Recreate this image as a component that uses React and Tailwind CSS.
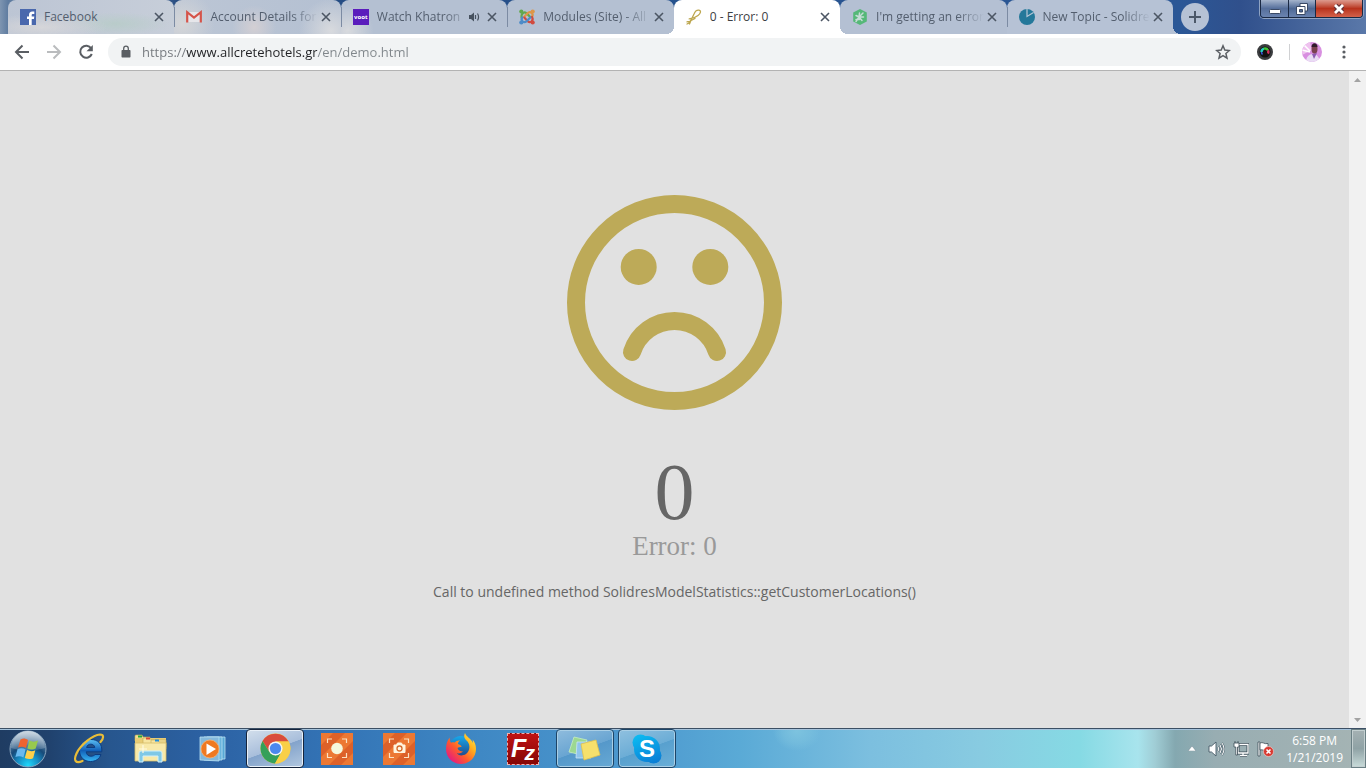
import React from "react";

const ui = "font-['Open_Sans','Noto_Sans',sans-serif]";

/* ---------- favicons ---------- */

function FacebookIcon() {
  return (
    <svg viewBox="0 0 16 16" className="size-4 shrink-0" aria-hidden="true">
      <rect width="16" height="16" fill="#4a68ad" />
      <path d="M9 16V10H7V7.500h2V6c0-2.300 1.200-3.500 3.300-3.500h2V5h-1.300C12 5 11.700 5.400 11.700 6.200v1.300h2.600L13.900 10h-2.200v6z" fill="#fff" />
    </svg>
  );
}

function GmailIcon() {
  return (
    <svg viewBox="0 0 16 16" className="size-4 shrink-0" aria-hidden="true">
      <path d="M2 3h12v10H2z" fill="#e6e6ea" />
      <path d="M1.200 13.500V3.200L8 8.600l6.800-5.400v10.300" fill="none" stroke="#d5544a" strokeWidth="2.200" />
    </svg>
  );
}

function VootIcon() {
  return (
    <span className="flex size-4 shrink-0 items-center justify-center bg-[#5a1cbc] text-[6px] leading-none font-bold text-white">
      voot
    </span>
  );
}

function JoomlaIcon() {
  return (
    <svg viewBox="0 0 16 16" className="size-4 shrink-0" fill="none" strokeWidth="2.200" strokeLinecap="round" aria-hidden="true">
      <path d="M2.500 8.500V7c0-1.200.3-1.700 1-2.400M3.500 4.500c1.700-1.800 3-1.300 4.200-.1l3.300 3.300" stroke="#62a84e" />
      <path d="M8.500 4.200c1.500-1.500 3-1.500 4.200-.2 1.300 1.300 1.300 2.700.1 4M8.400 4.500 5 8" stroke="#dd9648" />
      <path d="M13 8c1 1.500.8 3-.3 4.200-1.500 1.400-3 1-4.200-.3L5.300 8.600" stroke="#d14b3f" />
      <path d="M7.600 12.200c-1.300 1.200-2.800 1.200-4.100 0C2.300 11 2.300 9.600 3.300 8.300M7.700 12l3.600-3.500" stroke="#4e8cc8" />
      <circle cx="2.300" cy="2.600" r="2.100" fill="#62a84e" stroke="none" />
      <circle cx="13.700" cy="2.600" r="2.100" fill="#dd9648" stroke="none" />
      <circle cx="13.700" cy="13.500" r="2.100" fill="#d14b3f" stroke="none" />
      <circle cx="2.300" cy="13.500" r="2.100" fill="#4e8cc8" stroke="none" />
    </svg>
  );
}

function RibbonIcon() {
  return (
    <svg viewBox="0 0 16 16" className="size-4 shrink-0" fill="none" stroke="#bda74f" strokeWidth="1.300" strokeLinecap="round" aria-hidden="true">
      <path d="M1 15c3-1 5.500-6.500 7-10C9 2.500 11 .900 13 1.200c2.500.500 1.500 3.300-1 5.300C9.500 8.500 6 9.700 3.200 9.900M1 12.800c2.500-.400 5-1.500 8-3.300M5.500 10l-2 5" />
    </svg>
  );
}

function LeafIcon() {
  return (
    <svg viewBox="0 0 16 16" className="size-4 shrink-0" aria-hidden="true">
      <path d="M8 0l6.800 3.500v9L8 16l-6.800-3.500v-9z" fill="#55b878" />
      <path d="M4 12.500 7 8M7 8 4 6.500M7 8l.5-4M7 8l4-4M7 8h4.500M7 8l3 3.500M4 10.500h3.500" stroke="#c5dcd6" strokeWidth="1.500" strokeLinecap="round" fill="none" />
    </svg>
  );
}

function PieIcon() {
  return (
    <svg viewBox="0 0 16 16" className="size-4 shrink-0" aria-hidden="true">
      <circle cx="8" cy="8" r="8" fill="#24789a" />
      <path d="M8 0v7.500L14.500 3.500" fill="none" stroke="#b5c6d6" strokeWidth="1.200" />
    </svg>
  );
}

function CloseIcon() {
  return (
    <svg viewBox="0 0 16 16" className="size-4" fill="none" stroke="#4c5664" strokeWidth="1.600" aria-hidden="true">
      <path d="m4 4 8 8M12 4l-8 8" />
    </svg>
  );
}

function AudioIcon() {
  return (
    <svg viewBox="0 0 12 12" className="mr-1 size-3 shrink-0" fill="none" stroke="#46515f" aria-hidden="true">
      <path d="M1 4h2l3-2.500v9L3 8H1z" fill="#46515f" stroke="none" />
      <path d="M7.500 4v4M9.500 2.500c1.200 2 1.200 5 0 7" strokeWidth="1.200" />
    </svg>
  );
}

const tabs = [
  { title: "Facebook", icon: FacebookIcon, bg: "bg-[radial-gradient(ellipse_at_20%_80%,#d6d6d9_0%,transparent_35%),radial-gradient(ellipse_at_65%_70%,#b9ccca_0%,transparent_35%),linear-gradient(90deg,#bcc5d4,#c7ced9)]" },
  { title: "Account Details for", icon: GmailIcon, line: true, fade: true, bg: "bg-[radial-gradient(circle_at_5%_70%,#d5d6d8_0%,transparent_20%),radial-gradient(circle_at_48%_80%,#d3cfd3_0%,transparent_24%),radial-gradient(circle_at_94%_90%,#d8dade_0%,transparent_20%),linear-gradient(90deg,#bcc6d5,#b4c0d2)]" },
  { title: "Watch Khatron", icon: VootIcon, line: true, fade: true, audio: true, bg: "bg-[radial-gradient(circle_at_4%_90%,#d8dade_0%,transparent_16%),linear-gradient(90deg,#b4c0d2,#b4c0d2)]" },
  { title: "Modules (Site) - All", icon: JoomlaIcon, line: true, fade: true, bg: "bg-[#b4c0d2]" },
  { title: "0 - Error: 0", icon: RibbonIcon, active: true, bg: "bg-white" },
  { title: "I'm getting an error", icon: LeafIcon, fade: true, bg: "bg-[#b4c0d3]" },
  { title: "New Topic - Solidre", icon: PieIcon, line: true, fade: true, last: true, bg: "bg-[#b6c2d5]" },
];

function Tab({ tab }) {
  const Icon = tab.icon;
  return (
    <li className={`relative flex h-[34px] min-w-0 flex-1 items-center rounded-t-lg pr-[7px] pl-3 ${tab.bg}`}>
      {tab.line && <span className="absolute top-[7px] left-0 h-5 w-px bg-[#7c8ba3]" />}
      {tab.active && (
        <>
          <span className="absolute bottom-0 -left-2 z-10 size-2 bg-[radial-gradient(circle_at_0_0,transparent_8px,#fff_8px)]" />
          <span className="absolute -right-2 bottom-0 z-10 size-2 bg-[radial-gradient(circle_at_100%_0,transparent_8px,#fff_8px)]" />
        </>
      )}
      {tab.last && <span className="absolute -right-2 bottom-0 size-2 bg-[radial-gradient(circle_at_100%_0,transparent_8px,#b6c2d5_8px)]" />}
      <a href="#page" className="flex min-w-0 flex-1 items-center gap-2">
        <Icon />
        <span className={`min-w-0 flex-1 overflow-hidden text-xs whitespace-nowrap ${tab.active ? "text-[#3c4043]" : "text-[#535e6e]"} ${tab.fade ? "mask-r-from-75% mask-r-to-100%" : ""}`}>
          {tab.title}
        </span>
      </a>
      {tab.audio && <AudioIcon />}
      <button type="button" aria-label={`Close ${tab.title}`} className="shrink-0">
        <CloseIcon />
      </button>
    </li>
  );
}

function WindowControls() {
  return (
    <div className="mr-[3px] ml-auto flex h-[18px] shrink-0 self-start overflow-hidden rounded-b border border-t-0 border-[#1a2944] shadow-[0_0_0_1px_#8fa3c3]">
      <button type="button" aria-label="Minimize" className="flex w-7 items-center justify-center border-r border-[#1a2944] bg-linear-to-b from-[#a5b4cc] via-[#566f9b] to-[#6a83b0]">
        <svg viewBox="0 0 12 12" className="size-3" aria-hidden="true"><rect x=".5" y="6.500" width="11" height="4" rx="1" fill="#fff" stroke="#3b4a66" /></svg>
      </button>
      <button type="button" aria-label="Restore" className="flex w-[27px] items-center justify-center border-r border-[#1a2944] bg-linear-to-b from-[#a5b4cc] via-[#4e6894] to-[#6a83b0]">
        <svg viewBox="0 0 12 12" className="size-3" fill="#fff" stroke="#3b4a66" aria-hidden="true">
          <path d="M4 .500h7.500V8H9V11.500H.500V3.500H4z" />
          <path d="M3.500 6.500h3v2.500h-3z" fill="#4e6894" />
          <path d="M4 3.500h5V8" fill="none" />
        </svg>
      </button>
      <button type="button" aria-label="Close window" className="flex w-[46px] items-center justify-center bg-linear-to-b from-[#dc9a8e] via-[#b8321c] to-[#d4614a]">
        <svg viewBox="0 0 12 12" className="size-3" fill="none" aria-hidden="true">
          <path d="m2.500 2.500 7 7M9.500 2.500l-7 7" stroke="#5c3038" strokeWidth="5" />
          <path d="m2 2 8 8M10 2l-8 8" stroke="#fff" strokeWidth="2.800" />
        </svg>
      </button>
    </div>
  );
}

function TabStrip() {
  return (
    <header className="flex h-[34px] items-center bg-[linear-gradient(90deg,#7e95b1_0,#5f7ca0_8px,#54739c_150px,#24497f_180px,#26528d_640px,#2b5796_1180px,#30508c_1240px,#5a78a9_1366px)] pl-2">
      <ul className="flex max-w-[1165px] min-w-0 flex-1">
        {tabs.map((tab) => <Tab key={tab.title} tab={tab} />)}
      </ul>
      <button type="button" aria-label="New tab" className="ml-2 flex size-7 shrink-0 items-center justify-center rounded-full bg-[#b6c2d5]">
        <svg viewBox="0 0 14 14" className="size-[14px]" stroke="#4c5869" strokeWidth="2" aria-hidden="true"><path d="M7 1v12M1 7h12" /></svg>
      </button>
      <WindowControls />
    </header>
  );
}

/* ---------- toolbar ---------- */

function Toolbar() {
  return (
    <div className="flex h-[37px] items-center border-b border-[#b3b3b3] bg-white">
      <div className="flex items-center gap-4 pr-[14px] pl-[14px]">
        <button type="button" aria-label="Back">
          <svg viewBox="0 0 16 16" className="size-4" fill="none" stroke="#5a5e63" strokeWidth="2" aria-hidden="true"><path d="M15 8H2M8.500 1.500 2 8l6.500 6.500" /></svg>
        </button>
        <button type="button" aria-label="Forward">
          <svg viewBox="0 0 16 16" className="size-4" fill="none" stroke="#babcbe" strokeWidth="2" aria-hidden="true"><path d="M1 8h13M7.500 1.500 14 8l-6.500 6.500" /></svg>
        </button>
        <button type="button" aria-label="Reload">
          <svg viewBox="0 0 16 16" className="size-4" fill="none" stroke="#5a5e63" strokeWidth="2" aria-hidden="true">
            <path d="M13.200 4.300A6 6 0 1 0 13.800 10" />
            <path d="M14.800 1v6.300H8.500z" fill="#5a5e63" stroke="none" />
          </svg>
        </button>
      </div>
      <div className="flex h-7 min-w-0 flex-1 items-center rounded-full bg-[#f1f3f4] pr-[10px] pl-3">
        <svg viewBox="0 0 12 14" className="h-[14px] w-3 shrink-0" aria-hidden="true">
          <path d="M2.500 5h7c.600 0 1 .400 1 1v5.500c0 .600-.400 1-1 1h-7c-.600 0-1-.400-1-1V6c0-.600.400-1 1-1z" fill="#5a5e63" />
          <path d="M3.700 6V3.500a2.300 2.300 0 0 1 4.600 0V6" fill="none" stroke="#5a5e63" strokeWidth="1.300" />
        </svg>
        <input
          type="text"
          aria-label="Address"
          defaultValue="https://www.allcretehotels.gr/en/demo.html"
          className="ml-[10px] h-6 min-w-0 flex-1 bg-[linear-gradient(90deg,#73777c_44px,#202124_44px,#202124_175px,#80868b_175px)] bg-clip-text text-[13px] text-transparent outline-none"
        />
        <button type="button" aria-label="Bookmark this page" className="shrink-0">
          <svg viewBox="0 0 16 16" className="size-4" fill="none" stroke="#5a5e63" strokeWidth="1.500" aria-hidden="true">
            <path d="m8 1.800 1.800 4.300 4.600.4-3.500 3 1.100 4.600L8 11.700l-4 2.400 1.100-4.600-3.500-3 4.600-.4z" />
          </svg>
        </button>
      </div>
      <div className="flex items-center pr-[14px] pl-4">
        <button type="button" aria-label="Screen recorder">
          <svg viewBox="0 0 16 16" className="size-4" fill="none" aria-hidden="true">
            <circle cx="8" cy="8" r="8" fill="#3b3d3f" />
            <circle cx="8" cy="8" r="5.500" fill="#111" />
            <path d="M4.500 8A3.500 3.500 0 0 1 7 4.700" stroke="#25cfc0" strokeWidth="2.400" />
            <path d="M7 4.700a3.500 3.500 0 0 1 4 1.600" stroke="#45c735" strokeWidth="2.400" />
            <path d="M11 6.300a3.500 3.500 0 0 1 0 3.400" stroke="#d32f5d" strokeWidth="2.400" />
            <path d="M4.500 8a3.500 3.500 0 0 0 1 2.400" stroke="#3b59df" strokeWidth="1.500" />
          </svg>
        </button>
        <span className="mr-3 ml-4 h-4 w-px bg-[#d0d1d3]" />
        <button type="button" aria-label="Profile">
          <svg viewBox="0 0 20 20" className="size-5 rounded-full" aria-hidden="true">
            <rect width="20" height="20" fill="#d88fe0" />
            <path d="M0 0h8l2 8-10 5z" fill="#efc2ef" />
            <path d="M2 3l6 6M0 8l8 2" stroke="#fff" strokeWidth="1.500" />
            <path d="M4 20c0-5 3-8 7-8s6 3 7 8z" fill="#e9dcf4" />
            <path d="m10 12 2 5 3-6" fill="#8b5bb0" />
            <ellipse cx="12.500" cy="7" rx="3" ry="4.500" fill="#7a4150" />
            <path d="M9.500 5c0-5 6-5 6 0z" fill="#321b2c" />
          </svg>
        </button>
        <button type="button" aria-label="Menu" className="ml-[14px]">
          <svg viewBox="0 0 16 16" className="size-4" fill="#5a5e63" aria-hidden="true">
            <circle cx="8" cy="3" r="1.600" /><circle cx="8" cy="8" r="1.600" /><circle cx="8" cy="13" r="1.600" />
          </svg>
        </button>
      </div>
    </div>
  );
}

/* ---------- page ---------- */

function ErrorPage() {
  return (
    <div className="flex flex-1 bg-[#e1e1e1]">
      <main id="page" className="flex min-w-0 flex-1 flex-col items-center px-4 pt-[124px] pb-12 text-center">
        <svg viewBox="0 0 215 215" className="w-[215px]" fill="none" stroke="#bdaa58" strokeWidth="18" role="img" aria-label="Sad face">
          <circle cx="107.500" cy="107.500" r="98.500" />
          <path d="M65 157a44.600 44.600 0 0 1 85 0" strokeLinecap="round" />
          <circle cx="71.700" cy="71.900" r="18" fill="#bdaa58" stroke="none" />
          <circle cx="143.300" cy="71.900" r="18" fill="#bdaa58" stroke="none" />
        </svg>
        <h1 className="mt-11 font-['Liberation_Serif',serif] text-[80px] leading-[76px] text-[#666]">0</h1>
        <h2 className="font-['Liberation_Serif',serif] text-[27px] leading-8 text-[#999]">Error: 0</h2>
        <p className="mt-5 text-sm leading-5 text-[#666]">Call to undefined method SolidresModelStatistics::getCustomerLocations()</p>
      </main>
      <div className="flex w-[17px] shrink-0 flex-col justify-between bg-[#f1f1f1]">
        <button type="button" aria-label="Scroll up" className="flex h-[17px] items-center justify-center">
          <svg viewBox="0 0 7 4" className="h-1 w-[7px]" aria-hidden="true"><path d="M3.500 0 7 4H0z" fill="#a3a3a3" /></svg>
        </button>
        <button type="button" aria-label="Scroll down" className="flex h-[17px] items-center justify-center">
          <svg viewBox="0 0 7 4" className="h-1 w-[7px]" aria-hidden="true"><path d="M3.500 4 7 0H0z" fill="#a3a3a3" /></svg>
        </button>
      </div>
    </div>
  );
}

/* ---------- taskbar ---------- */

function StartOrb() {
  return (
    <svg viewBox="0 0 38 38" className="size-[38px]" aria-hidden="true">
      <defs>
        <radialGradient id="orb" cx=".5" cy=".95" r=".9">
          <stop offset="0" stopColor="#1fd8fb" /><stop offset=".35" stopColor="#1689c0" /><stop offset=".6" stopColor="#174a79" /><stop offset="1" stopColor="#7d9ab5" />
        </radialGradient>
        <linearGradient id="orbShine" x2="0" y2="1"><stop offset="0" stopColor="#fff" stopOpacity=".6" /><stop offset="1" stopColor="#fff" stopOpacity=".15" /></linearGradient>
      </defs>
      <circle cx="19" cy="19" r="18" fill="url(#orb)" stroke="#8aa6bf" />
      <path d="M2 18a17 17 0 0 1 34 0c-9 3-25 3-34 0z" fill="url(#orbShine)" />
      <path d="M11.500 9.500c3-1.500 5-1 7.500.500L17 18c-2.500-1.500-5-1.800-8-.5z" fill="#ee6330" />
      <path d="M20.300 10.600c3 1.300 5.500 1.500 8.700 0l-2.300 8c-3 1.400-5.500 1-8.300-.2z" fill="#97c94e" />
      <path d="M8.600 19c3-1.300 5.500-1 8 .500l-2.200 8c-2.500-1.500-5-1.700-8-.5z" fill="#69b9ef" />
      <path d="M18 20c2.700 1.300 5.300 1.600 8.300.3l-2.200 7.900c-3 1.400-5.600 1-8.300-.3z" fill="#fdd04b" />
    </svg>
  );
}

function ExplorerIcon() {
  return (
    <svg viewBox="0 0 34 34" className="size-[34px]" fill="none" aria-hidden="true">
      <defs><linearGradient id="ie" x2="0" y2="1"><stop offset="0" stopColor="#5cc0f4" /><stop offset=".5" stopColor="#1260b8" /><stop offset="1" stopColor="#38b7f4" /></linearGradient></defs>
      <path d="M29 22.500C27.500 27 23.500 29.500 18.500 29.500 12 29.500 7.500 25 7.500 18.500S12.500 7.500 19 7.500c7 0 11.500 4.500 10.800 12.300H14.200c.3 3 2.200 4.400 4.800 4.400 2 0 3-.6 4-1.700zM14.600 15.500h8.200c-.5-2.300-1.900-3.300-4-3.300s-3.600 1-4.200 3.300z" fill="url(#ie)" stroke="#0d3c80" strokeWidth="1" />
      <path d="M28.500 10c3.500-4 3.500-7.500-.5-7.500C21 3 9 12 4.500 21.500c-3.200 7-1 10.500 6 7.500" stroke="#e9bd38" strokeWidth="2.200" strokeLinecap="round" />
    </svg>
  );
}

function FolderIcon() {
  return (
    <svg viewBox="0 0 34 32" className="h-8 w-[34px]" aria-hidden="true">
      <path d="M1 3q0-1 1-1h6l1 2h7v4H1z" fill="#f3dd91" stroke="#c4a854" strokeWidth=".6" />
      <path d="M1 5h31v23H1z" fill="#e9cc74" />
      <path d="M9 5h7l1 2h15v7H9z" fill="#f7e5a0" stroke="#c4a854" strokeWidth=".6" />
      <path d="M17 7h7l1 2h7v7H17z" fill="#f7e5a0" stroke="#c4a854" strokeWidth=".6" />
      <rect x="4" y="2.500" width="4" height="2" fill="#25a83d" /><rect x="12" y="4.500" width="4" height="2" fill="#db4838" /><rect x="21" y="6.500" width="4" height="2" fill="#238edb" />
      <path d="M1 10h31v18H1z" fill="#f8e9a9" stroke="#d6bd6a" strokeWidth=".8" />
      <path d="M5 29V20q0-2 2-2h19q2 0 2 2v9h-4v-6H9v6z" fill="#7fc8e6" stroke="#d1f0fb" />
      <path d="M9 12v8M5 16h8" stroke="#fffbe0" strokeWidth="1.200" />
    </svg>
  );
}

function MediaIcon() {
  return (
    <svg viewBox="0 0 30 28" className="h-7 w-[30px]" aria-hidden="true">
      <path d="M9 2h18v22H9z" fill="#58a8d5" stroke="#b9e1f2" strokeWidth=".8" /><path d="M6 2h18v23H6z" fill="#69b4dd" stroke="#b9e1f2" strokeWidth=".8" />
      <path d="M2 2h19v24l-19-1z" fill="#84b9dc" stroke="#b9e1f2" strokeWidth=".8" />
      <circle cx="12" cy="14" r="9" fill="#ef7921" stroke="#fbb06c" strokeWidth=".8" /><path d="M8.500 8.500 18 14l-9.500 6z" fill="#fff" />
    </svg>
  );
}

function ChromeIcon() {
  return (
    <svg viewBox="0 0 32 32" className="size-[31px]" aria-hidden="true">
      <circle cx="16" cy="16" r="15.500" fill="#f8cd45" />
      <path d="M2.600 8.200A15.500 15.500 0 0 1 29.500 8.800H16L9.800 19.600z" fill="#d94c3d" />
      <path d="M2.600 8.200 9.800 19.600 16 23.200l6.200-3.600L15.500 31.500A15.500 15.500 0 0 1 2.600 8.200z" fill="#35a05a" />
      <path d="M29.500 8.800A15.500 15.500 0 0 1 15.500 31.500L22.200 19.600 23 12 16 8.800z" fill="#f9cf47" />
      <circle cx="16" cy="16" r="7.300" fill="#f5f5f5" /><circle cx="16" cy="16" r="5.800" fill="#4b88ee" />
    </svg>
  );
}

function CaptureIcon({ camera = false }) {
  return (
    <svg viewBox="0 0 32 32" className="size-8" fill="none" aria-hidden="true">
      <rect width="32" height="32" fill="#ec7833" />
      <path d="M0 24 24 0H12L0 12zM8 32 32 8v12L20 32z" fill="#dd6129" />
      <path d="M6.500 10V6H11M21 6h4.500v4M6.500 20v4.500H11M21 24.500h4.500V20" stroke="#fbe1c1" strokeWidth="1.200" />
      {camera ? (
        <>
          <path d="M11 12h2.500l1-2h4l1 2H22v7.500H11z" fill="#fff5df" stroke="#fff5df" strokeLinejoin="round" />
          <circle cx="16.500" cy="15.500" r="2.500" stroke="#d66a2c" strokeWidth="1.300" />
        </>
      ) : (
        <circle cx="16" cy="15.500" r="5.800" fill="#f5f7dc" />
      )}
    </svg>
  );
}

function FirefoxIcon() {
  return (
    <svg viewBox="0 0 32 32" className="size-8" aria-hidden="true">
      <defs>
        <linearGradient id="fox" x1="1" y1="0" x2=".1" y2=".9"><stop offset="0" stopColor="#fff44f" /><stop offset=".35" stopColor="#ffb01e" /><stop offset=".65" stopColor="#ff5a2d" /><stop offset="1" stopColor="#e31587" /></linearGradient>
        <linearGradient id="globe" x2="0" y2="1"><stop offset="0" stopColor="#16a9ec" /><stop offset="1" stopColor="#213779" /></linearGradient>
      </defs>
      <circle cx="16" cy="15" r="12" fill="url(#globe)" />
      <path d="M20 0c-2 4 0 6 2.500 8.500C25.500 12 25 18 21 21c-4 2.500-8 1.500-9-1 2 1 4.500 0 6-1.500-3 0-5-1.200-5.500-3.500 1-.8 2.500-1 4-1 .3-1.500-2-2.500-3.500-3 0-1.500.500-2.500 2-3.500-2.500-.200-4 .500-5.500 2-1.300-.300-2.500-.200-3.500.300C5 8.500 4.500 6.500 4.700 4.500 2.500 7 1 11 1 16c0 8.500 6.700 15 15 15s15-6.500 15-15c0-4-1.500-7.500-3.500-9.500.5 1.500.5 3 .5 3.500C26 5 21 4 20 0z" fill="url(#fox)" />
    </svg>
  );
}

function FileZillaIcon() {
  return (
    <span className="flex size-8 items-center justify-center border border-dashed border-[#efb0ad] bg-linear-to-b from-[#c01414] to-[#850606] font-['Liberation_Sans',sans-serif] text-white italic">
      <b className="text-[25px] leading-none">F</b>
      <b className="-ml-[2px] pt-2 text-[21px] leading-none">z</b>
    </span>
  );
}

function NotesIcon() {
  return (
    <svg viewBox="0 0 34 28" className="h-7 w-[34px]" aria-hidden="true">
      <path d="m6 2 13 3-5 15L1 17z" fill="#9cd892" stroke="#c7eec0" strokeWidth=".8" />
      <path d="M9 7h14v16H8z" fill="#8fc4ec" stroke="#c9e4f6" strokeWidth=".8" />
      <path d="m13 9 15-4 4 15-16 5z" fill="#f6e06c" stroke="#dfc24c" strokeWidth=".8" />
    </svg>
  );
}

function SkypeIcon() {
  return (
    <span className="grid place-items-center">
      <svg viewBox="0 0 30 30" className="col-start-1 row-start-1 size-[30px]" aria-hidden="true">
        <defs><linearGradient id="skype" gradientUnits="userSpaceOnUse" x1="6" y1="0" x2="18" y2="30"><stop offset="0" stopColor="#0cbcf2" /><stop offset="1" stopColor="#0a7fd6" /></linearGradient></defs>
        <g fill="url(#skype)"><circle cx="15" cy="15" r="13" /><circle cx="8.500" cy="8.500" r="8" /><circle cx="21.500" cy="21.500" r="8" /></g>
      </svg>
      <b className="col-start-1 row-start-1 font-['Liberation_Sans',sans-serif] text-2xl leading-none text-white">S</b>
    </span>
  );
}

const apps = [
  { name: "Internet Explorer", icon: <ExplorerIcon /> },
  { name: "Windows Explorer", icon: <FolderIcon /> },
  { name: "Media Player", icon: <MediaIcon /> },
  { name: "Google Chrome", icon: <ChromeIcon />, frame: "border border-[#15243c] bg-[linear-gradient(160deg,#d3dfec_0%,#a8bedb_50%,#83a3cb_51%,#b2c8e0_100%)] shadow-[inset_0_0_0_1px_#e8f0f8] rounded-sm" },
  { name: "Screen recorder", icon: <CaptureIcon /> },
  { name: "Screen capture", icon: <CaptureIcon camera /> },
  { name: "Firefox", icon: <FirefoxIcon /> },
  { name: "FileZilla", icon: <FileZillaIcon /> },
  { name: "Sticky Notes", icon: <NotesIcon />, frame: "border border-[#1d4568] bg-[linear-gradient(160deg,#8fbcdd_0%,#69a5d2_50%,#5598ca_51%,#67a9d4_100%)] shadow-[inset_0_0_0_1px_#a9cfe6] rounded-sm" },
  { name: "Skype", icon: <SkypeIcon />, frame: "border border-[#1d4568] bg-[linear-gradient(160deg,#8fc0df_0%,#6cadd6_50%,#58a0ce_51%,#6aafd8_100%)] shadow-[inset_0_0_0_1px_#a9cfe6] rounded-sm" },
];

function Tray() {
  return (
    <div className="ml-auto flex shrink-0 items-center self-stretch">
      <button type="button" aria-label="Show hidden icons" className="mr-3">
        <svg viewBox="0 0 8 5" className="h-[5px] w-2" aria-hidden="true"><path d="M4 0 8 5H0z" fill="#fff" stroke="#5e7480" strokeWidth=".4" /></svg>
      </button>
      <button type="button" aria-label="Volume" className="mr-2">
        <svg viewBox="0 0 17 16" className="h-4 w-[17px]" fill="none" aria-hidden="true">
          <path d="M1 5h2.500L8 1v14l-4.500-4H1z" fill="#fff" stroke="#465a66" strokeWidth=".9" />
          <path d="M10 5.500q1.500 2.500 0 5M12 3.800q3 4.200 0 8.400M14 2q4 6 0 12" stroke="#465a66" strokeWidth="1.900" />
          <path d="M10 5.500q1.500 2.500 0 5M12 3.800q3 4.200 0 8.400M14 2q4 6 0 12" stroke="#fff" />
        </svg>
      </button>
      <button type="button" aria-label="Network" className="mr-2">
        <svg viewBox="0 0 16 16" className="size-4" fill="none" aria-hidden="true">
          <path d="M5 3.500h10V12H5zM7 14.500h7" stroke="#3d4e58" strokeWidth="3" /><path d="M5 3.500h10V12H5zM10 12v2M7 14.500h7" stroke="#fff" strokeWidth="1.300" />
          <path d="M1 2h5v4H4.500v8H2.800V6H1zM2 2V0M5 2V0" fill="#fff" stroke="#3d4e58" strokeWidth=".8" />
        </svg>
      </button>
      <button type="button" aria-label="Action Center" className="mr-3">
        <svg viewBox="0 0 17 16" className="h-4 w-[17px]" aria-hidden="true">
          <path d="M1 1h2v14H1z" fill="#fff" stroke="#3d4e58" strokeWidth=".8" />
          <path d="M3 2c3-1.500 4 1.500 8 .500v7c-4 1-5-1.500-8-.500z" fill="#fff" stroke="#3d4e58" strokeWidth=".8" />
          <circle cx="11.500" cy="10.500" r="5" fill="#d83931" stroke="#f3d6d3" strokeWidth=".6" /><path d="m9.500 8.500 4 4M13.500 8.500l-4 4" stroke="#fff" strokeWidth="1.600" />
        </svg>
      </button>
      <button type="button" className="mr-2 text-center text-xs leading-[17px] text-white">
        <time className="block">6:58 PM</time>
        <time className="block">1/21/2019</time>
      </button>
      <button type="button" aria-label="Show desktop" className="h-full w-[15px] border border-[#6a7f84] bg-linear-to-b from-[#a5b1b3] via-[#8fa2a5] to-[#c9dcda] shadow-[inset_0_0_0_1px_#c3cfd0]" />
    </div>
  );
}

function Taskbar() {
  return (
    <footer className="flex h-10 items-center gap-1 border-t border-[#3c4f64] bg-[radial-gradient(ellipse_24px_20px_at_797px_2px,#7dc3df_0,#7dc3df80_60%,transparent_100%),linear-gradient(90deg,#1f3c62_0,#20426e_50px,#27568e_110px,#2c62a4_210px,#3373b5_330px,#3f88c4_480px,#4d99cf_640px,#5aaad6_740px,#7cbfdf_870px,#88cbe1_980px,#86dae4_1080px,#a8e4ed_1138px,#a0cdd5_1155px,#84a8b0_1175px,#98adb2_1215px,#a5b4b4_1366px)] shadow-[inset_0_1px_0_#a5c3dc]">
      <button type="button" aria-label="Start" className="flex h-full w-14 shrink-0 items-center justify-center"><StartOrb /></button>
      <nav aria-label="Taskbar" className="flex h-full min-w-0 gap-1">
        {apps.map((app) => (
          <button key={app.name} type="button" aria-label={app.name} className={`flex h-full w-[58px] shrink-0 items-center justify-center ${app.frame ?? ""}`}>
            {app.icon}
          </button>
        ))}
      </nav>
      <Tray />
    </footer>
  );
}

export default function App() {
  return (
    <div className={`flex min-h-screen flex-col ${ui}`}>
      <TabStrip />
      <Toolbar />
      <ErrorPage />
      <Taskbar />
    </div>
  );
}
